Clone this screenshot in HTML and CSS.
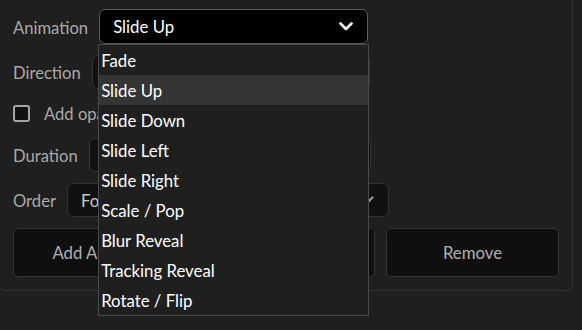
FILE: index.html
```html
<!DOCTYPE html>
<html>
  <head>
    <title>Text animation</title>
    <link rel="stylesheet" href="styles.css">
  </head>
  <body>
    <div class="panel">
      <div class="field">
        <span class="field-label">Animation</span>
        <div class="select-wrap select-wrap-animation">
          <div class="select open">
            <span>Slide Up</span>
            <svg class="chevron" width="14" height="9" viewBox="0 0 14 9"><path d="M1.5 1.5 L7 7 L12.5 1.5" fill="none" stroke="#fff" stroke-width="2.6" stroke-linecap="round" stroke-linejoin="round"/></svg>
          </div>
          <ul class="options">
            <li class="option">Fade</li>
            <li class="option selected">Slide Up</li>
            <li class="option">Slide Down</li>
            <li class="option">Slide Left</li>
            <li class="option">Slide Right</li>
            <li class="option">Scale / Pop</li>
            <li class="option">Blur Reveal</li>
            <li class="option">Tracking Reveal</li>
            <li class="option">Rotate / Flip</li>
          </ul>
        </div>
      </div>
      <div class="field">
        <span class="field-label">Direction</span>
        <div class="select select-direction">
          <span>Bottom to top</span>
          <svg class="chevron" width="14" height="9" viewBox="0 0 14 9"><path d="M1.5 1.5 L7 7 L12.5 1.5" fill="none" stroke="#9a9a9a" stroke-width="2.2" stroke-linecap="round" stroke-linejoin="round"/></svg>
        </div>
      </div>
      <label class="check-row">
        <span class="checkbox"></span>
        <span class="check-label">Add opacity fade</span>
      </label>
      <div class="field">
        <span class="field-label">Duration</span>
        <div class="select select-duration">
          <span>0.5 s</span>
        </div>
      </div>
      <div class="field">
        <span class="field-label">Order</span>
        <div class="select select-order">
          <span>Forward</span>
          <svg class="chevron" width="14" height="9" viewBox="0 0 14 9"><path d="M1.5 1.5 L7 7 L12.5 1.5" fill="none" stroke="#9a9a9a" stroke-width="2.2" stroke-linecap="round" stroke-linejoin="round"/></svg>
        </div>
      </div>
      <div class="actions">
        <div class="btn btn-add">Add Animation to Selected Text Layers</div>
        <div class="btn btn-remove">Remove</div>
      </div>
    </div>
  </body>
</html>
```

FILE: styles.css
```css
html {
  height: 100%;
}
body {
  margin: 0;
  min-height: 100%;
  background-color: #1f1f1f;
  font-family: Lato, "Open Sans", sans-serif;
}
.panel {
  box-sizing: border-box;
  width: 574px;
  margin: -1px 0 0 -1px;
  padding: 9px 13px 13px 13px;
  border: 1px solid #333;
  border-radius: 0 0 6px 6px;
  display: flex;
  flex-flow: column nowrap;
  gap: 11px;
}
.field {
  display: flex;
  flex-flow: row nowrap;
  align-items: center;
  gap: 11px;
}
.field-label {
  color: #a9a9a9;
  font-size: 16.6px;
  padding-top: 2px;
}
.select-wrap {
  position: relative;
}
.select {
  box-sizing: border-box;
  height: 34px;
  padding: 0 14px 0 13px;
  display: flex;
  flex-flow: row nowrap;
  align-items: center;
  justify-content: space-between;
  background-color: #111;
  border: 1px solid #333;
  border-radius: 6px;
  color: #c8c8c8;
  font-size: 16.8px;
}
.select.open {
  width: 269px;
  height: 35px;
  background-color: #000;
  border-color: #5c5c5c;
  color: #fff;
}
.select-direction {
  width: 278px;
}
.select-duration {
  width: 282px;
}
.select-order {
  width: 322px;
}
.options {
  position: absolute;
  top: 100%;
  left: -1px;
  right: -1px;
  margin: 0;
  padding: 0;
  list-style: none;
  background-color: #1f1f1f;
  border: 1px solid #4a4a4a;
  z-index: 10;
}
.option {
  height: 30px;
  line-height: 31px;
  padding-left: 2px;
  color: #fff;
  font-size: 16.8px;
}
.option.selected {
  background-color: #353535;
}
.check-row {
  height: 27px;
  display: flex;
  flex-flow: row nowrap;
  align-items: center;
  gap: 14px;
}
.checkbox {
  box-sizing: border-box;
  width: 17px;
  height: 17px;
  border: 2px solid #a5a5a5;
  border-radius: 3px;
  background-color: #111;
}
.check-label {
  color: #a9a9a9;
  font-size: 16.6px;
}
.actions {
  display: flex;
  flex-flow: row nowrap;
  gap: 11px;
}
.btn {
  box-sizing: border-box;
  height: 49px;
  display: flex;
  align-items: center;
  justify-content: center;
  background-color: #0f0f0f;
  border: 1px solid #333;
  border-radius: 5px;
  color: #b0b0b0;
  font-size: 16.8px;
  white-space: nowrap;
}
.btn-add {
  width: 362px;
}
.btn-remove {
  width: 173px;
}
```
